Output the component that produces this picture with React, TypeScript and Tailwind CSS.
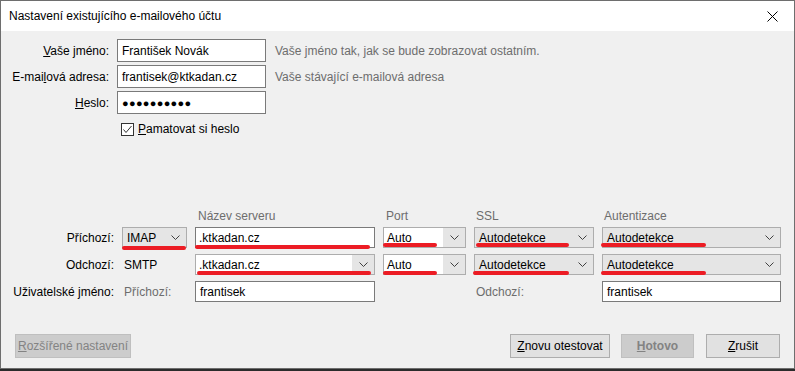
import { ReactNode } from 'react';

const font = "font-['Segoe_UI','Liberation_Sans',Arial,sans-serif]";

function Chevron() {
  return (
    <svg width="9" height="5" viewBox="0 0 9 5" className="shrink-0">
      <polyline points="0.5,0.5 4.5,4.5 8.5,0.5" fill="none" stroke="#404040" strokeWidth="1" />
    </svg>
  );
}

// red brush mark that someone painted over the screenshot
function Mark({ className }: { className: string }) {
  return <span className={`absolute h-[4px] rounded-full bg-[#ec1c24] ${className}`} />;
}

function TextInput({ value, className = '', children }: { value: ReactNode; className?: string; children?: ReactNode }) {
  return (
    <div className={`relative flex items-center bg-white border border-[#7a7a7a] px-[4px] text-black ${className}`}>
      <span className="whitespace-nowrap">{value}</span>
      {children}
    </div>
  );
}

function Select({ value, className = '', children }: { value: string; className?: string; children?: ReactNode }) {
  return (
    <div className={`relative flex items-center justify-between bg-[#e5e5e5] border border-[#adadad] pl-[4px] pr-[6px] text-black ${className}`}>
      <span className="whitespace-nowrap">{value}</span>
      <Chevron />
      {children}
    </div>
  );
}

function Combo({ value, className = '', children }: { value: string; className?: string; children?: ReactNode }) {
  return (
    <div className={`relative flex items-stretch bg-white border border-[#adadad] text-black ${className}`}>
      <span className="flex-1 flex items-center pl-[3px] whitespace-nowrap">{value}</span>
      <span className="w-[22px] flex items-center justify-center bg-[#e5e5e5]">
        <Chevron />
      </span>
      {children}
    </div>
  );
}

function Button({ children, disabled, className = '' }: { children: ReactNode; disabled?: boolean; className?: string }) {
  return (
    <button
      className={`h-[24px] border text-[12px] ${
        disabled ? 'bg-[#cccccc] border-[#bfbfbf] text-[#838383]' : 'bg-[#e1e1e1] border-[#adadad] text-black'
      } ${className}`}
    >
      {children}
    </button>
  );
}

export default function App() {
  return (
    <div className={`w-[795px] h-[371px] bg-[#2b2b2b] ${font} text-[12px] leading-none`}>
      <div className="w-[795px] h-[369px] flex flex-col border border-[#6e6e6e] bg-[#f0f0f0]">
        {/* title bar */}
        <div className="h-[30px] bg-white flex items-center justify-between pl-[8px] pr-[16px] shrink-0">
          <span className="text-black">Nastavení existujícího e-mailového účtu</span>
          <svg width="11" height="11" viewBox="0 0 11 11">
            <path d="M0.5 0.5 L10.5 10.5 M10.5 0.5 L0.5 10.5" stroke="#000" strokeWidth="1" />
          </svg>
        </div>

        {/* identity */}
        <div className="flex flex-col gap-[3px] pt-[8px]">
          <div className="flex items-center h-[23px]">
            <span className="w-[108px] text-right text-black">
              <u>V</u>aše jméno:
            </span>
            <TextInput value="František Novák" className="ml-[8px] w-[149px] h-[23px]" />
            <span className="ml-[9px] text-[#6d6d6d]">Vaše jméno tak, jak se bude zobrazovat ostatním.</span>
          </div>
          <div className="flex items-center h-[23px]">
            <span className="w-[108px] text-right text-black">
              E-mai<u>l</u>ová adresa:
            </span>
            <TextInput value="frantisek@ktkadan.cz" className="ml-[8px] w-[149px] h-[23px]" />
            <span className="ml-[9px] text-[#6d6d6d]">Vaše stávající e-mailová adresa</span>
          </div>
          <div className="flex items-center h-[23px]">
            <span className="w-[108px] text-right text-black">
              <u>H</u>eslo:
            </span>
            <TextInput
              value={<span className="tracking-[0.3px] text-[11px]">●●●●●●●●●●</span>}
              className="ml-[8px] w-[149px] h-[23px]"
            />
          </div>
          <div className="flex items-center h-[20px] pl-[120px] mt-[2px]">
            <span className="w-[13px] h-[13px] bg-white border border-[#333] flex items-center justify-center">
              <svg width="11" height="11" viewBox="0 0 11 11">
                <polyline points="1.5,5.5 4,8.5 9.5,2" fill="none" stroke="#333" strokeWidth="1" />
              </svg>
            </span>
            <span className="ml-[4px] text-black">
              <u>P</u>amatovat si heslo
            </span>
          </div>
        </div>

        {/* servers */}
        <div className="mt-[71px] pl-[7px] grid grid-cols-[106px_65px_180px_83px_120px_179px] gap-x-[8px] gap-y-[6px] items-center">
          <span />
          <span />
          <span className="text-[#6d6d6d] pl-[3px] -mb-[1px]">Název serveru</span>
          <span className="text-[#6d6d6d] pl-[3px] -mb-[1px]">Port</span>
          <span className="text-[#6d6d6d] pl-[2px] -mb-[1px]">SSL</span>
          <span className="text-[#6d6d6d] pl-[2px] -mb-[1px]">Autentizace</span>

          <span className="text-right text-black">Příchozí:</span>
          <Select value="IMAP" className="h-[21px]">
            <Mark className="-left-[1px] w-[64px] -bottom-[3px]" />
          </Select>
          <TextInput value=".ktkadan.cz" className="h-[21px] pl-[3px]">
            <Mark className="-left-[1px] w-[175px] -bottom-[2px]" />
          </TextInput>
          <Combo value="Auto" className="h-[21px]">
            <Mark className="-left-[1px] w-[54px] bottom-[0px]" />
          </Combo>
          <Select value="Autodetekce" className="h-[21px]">
            <Mark className="left-[1px] w-[93px] bottom-[0px]" />
          </Select>
          <Select value="Autodetekce" className="h-[21px]">
            <Mark className="-left-[2px] w-[105px] bottom-[0px]" />
          </Select>

          <span className="text-right text-black">Odchozí:</span>
          <span className="pl-[2px] text-black">SMTP</span>
          <Combo value=".ktkadan.cz" className="h-[21px]">
            <Mark className="left-[1px] w-[174px] -bottom-[1px]" />
          </Combo>
          <Combo value="Auto" className="h-[21px]">
            <Mark className="-left-[1px] w-[54px] -bottom-[1px]" />
          </Combo>
          <Select value="Autodetekce" className="h-[21px]">
            <Mark className="-left-[2px] w-[96px] -bottom-[1px]" />
          </Select>
          <Select value="Autodetekce" className="h-[21px]">
            <Mark className="-left-[2px] w-[105px] -bottom-[1px]" />
          </Select>

          <span className="text-right text-black whitespace-nowrap">Uživatelské jméno:</span>
          <span className="pl-[2px] text-[#6d6d6d]">Příchozí:</span>
          <TextInput value="frantisek" className="h-[21px]" />
          <span />
          <span className="pl-[2px] text-[#6d6d6d]">Odchozí:</span>
          <TextInput value="frantisek" className="h-[21px]" />
        </div>

        {/* footer */}
        <div className="mt-auto mb-[10px] flex items-center pl-[14px] pr-[14px]">
          <Button disabled className="w-[116px]">
            <u>R</u>ozšířené nastavení
          </Button>
          <Button className="ml-auto w-[100px]">
            <u>Z</u>novu otestovat
          </Button>
          <Button disabled className="ml-[11px] w-[73px] font-bold">
            <u>H</u>otovo
          </Button>
          <Button className="ml-[12px] w-[74px]">
            <u>Z</u>rušit
          </Button>
        </div>
      </div>
    </div>
  );
}
